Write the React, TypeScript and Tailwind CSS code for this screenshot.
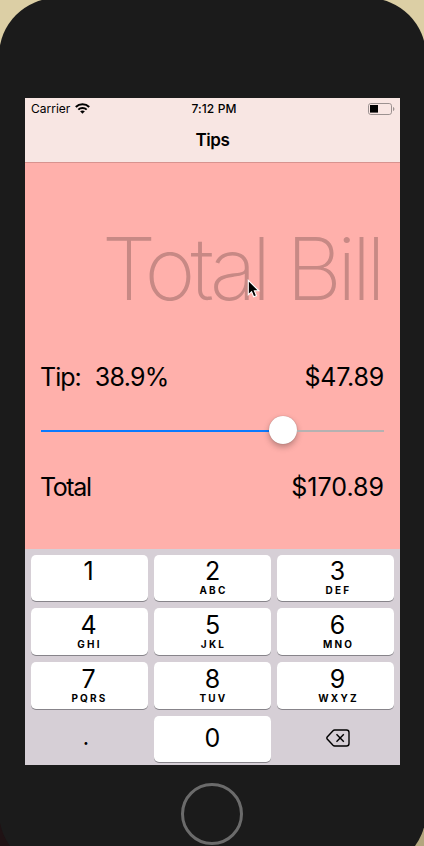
const KEYS = [
  { digit: "1", letters: "" },
  { digit: "2", letters: "ABC" },
  { digit: "3", letters: "DEF" },
  { digit: "4", letters: "GHI" },
  { digit: "5", letters: "JKL" },
  { digit: "6", letters: "MNO" },
  { digit: "7", letters: "PQRS" },
  { digit: "8", letters: "TUV" },
  { digit: "9", letters: "WXYZ" },
];

function WifiIcon() {
  return (
    <svg className="ml-[5px] h-[11px] w-[15px]" viewBox="0 0 15 11" fill="none" stroke="#000">
      <path d="M.8 3.900C4.500 .4 10.500 .4 14.200 3.900" strokeWidth="2.100" />
      <path d="M3.300 6.600C5.600 4.400 9.400 4.400 11.700 6.600" strokeWidth="2" />
      <path d="M7.500 10.700L5.100 8.300C6.500 7.100 8.500 7.100 9.900 8.300Z" fill="#000" stroke="none" />
    </svg>
  );
}

function BatteryIcon() {
  return (
    <svg className="h-[12px] w-[27px]" viewBox="0 0 27 12" fill="none">
      <rect x=".5" y=".5" width="23" height="11" rx="2.3" stroke="#9b9190" />
      <rect x="2" y="2" width="8" height="7.600" fill="#000" />
      <path d="M25 4v4c.8-.3 1.400-1.100 1.400-2S25.800 4.300 25 4Z" fill="#9b9190" />
    </svg>
  );
}

function StatusBar() {
  return (
    <div className="grid h-5 grid-cols-3 items-center text-[12px] leading-5">
      <div className="flex items-center pl-[6px]">
        <span>Carrier</span>
        <WifiIcon />
      </div>
      <div className="pt-px pl-[3px] text-center font-medium tracking-[0.1px]">7:12 PM</div>
      <div className="flex justify-end pr-[5px]">
        <BatteryIcon />
      </div>
    </div>
  );
}

function Slider() {
  return (
    <div className="mt-[24px] flex h-7 items-center">
      <div className="mt-[2px] h-[2px] w-[228.4px] bg-[#0a7aff]" />
      <div className="size-7 shrink-0 rounded-full bg-white shadow-[0_3px_6px_rgba(0,0,0,0.28),0_0_1px_rgba(0,0,0,0.3)]" />
      <div className="mt-[2px] h-[2px] flex-1 bg-[#b5b1b1]" />
    </div>
  );
}

function Key({ digit, letters }: { digit: string; letters: string }) {
  return (
    <button className="flex flex-col items-center justify-end rounded-[5px] bg-white pb-[5px] shadow-[0_1px_0_#87848a] nth-[3n]:pl-[4px] nth-[3n+1]:pr-[2px]">
      <span className="text-[25px] leading-[30px]">{digit}</span>
      <span className="-mt-px h-[11px] pl-[2px] text-[10px] leading-[11px] font-bold tracking-[2.2px]">{letters}</span>
    </button>
  );
}

function Keypad() {
  return (
    <div className="grid h-[216px] grid-cols-3 grid-rows-[46px_47px_47px_46px] gap-x-[6px] gap-y-[7px] bg-[#d6cfd6] px-[6px] pt-[6px]">
      {KEYS.map((key) => (
        <Key key={key.digit} digit={key.digit} letters={key.letters} />
      ))}
      <button className="flex items-center justify-center pr-[7px] pb-[4px]">
        <span className="text-[22px] leading-[40px]">.</span>
      </button>
      <button className="flex items-center justify-center rounded-[5px] bg-white text-[25px] shadow-[0_1px_0_#87848a]">
        0
      </button>
      <button className="flex items-center justify-center pl-[5px]">
        <svg className="mt-[-2px] h-[18px] w-[24px]" viewBox="0 0 24 18" fill="none" stroke="#000" strokeWidth="1.4">
          <path d="M8.600 1H20.500Q23 1 23 3.500V14.500Q23 17 20.500 17H8.600Q7.700 17 7 16.300L1.200 10Q.500 9 1.200 8L7 1.700Q7.700 1 8.600 1Z" />
          <path d="M10.500 5.200L17.800 12.800M17.800 5.200L10.500 12.800" />
        </svg>
      </button>
    </div>
  );
}

export default function App() {
  return (
    <div className="relative h-[846px] w-[424px] overflow-hidden bg-[#dccfa5] font-['Inter','Liberation_Sans',sans-serif] text-black">
      <div className="absolute top-[800px] left-0 h-[46px] w-[60px] bg-[#1f1214]" />
      <div className="absolute top-[800px] right-0 h-[46px] w-[60px] bg-[#b3a67e]" />
      <div className="relative -top-[2px] -left-px flex h-[872px] w-[427px] flex-col rounded-[58px] bg-[#1b1b1b] pt-[100px] pl-[26px]">
        <main className="flex h-[667px] w-[375px] flex-col bg-[#ffb0ab]">
          <header className="h-[65px] border-b border-[#d8938f] bg-[#f8e6e3]">
            <StatusBar />
            <h1 className="mt-[11px] text-center text-[17px] leading-[22px] font-semibold tracking-[-0.4px]">Tips</h1>
          </header>
          <section className="flex-1 px-4 pt-[54px]">
            <div className="flex justify-end text-[87px] leading-[104px] font-extralight tracking-[-4.9px] whitespace-nowrap text-[#c78985]">
              <span className="pr-[3px]">Total Bill</span>
            </div>
            <div className="mt-[41px] flex h-[30px] items-center text-[25px] leading-[30px]">
              <span className="-ml-px tracking-[-1px]">Tip:</span>
              <span className="ml-[14px] tracking-[-0.7px]">38.9%</span>
              <span className="ml-auto tracking-[-0.2px]">$47.89</span>
            </div>
            <Slider />
            <div className="mt-[28px] flex items-center justify-between text-[25px] leading-[30px]">
              <span className="-ml-px tracking-[-1.4px]">Total</span>
              <span>$170.89</span>
            </div>
          </section>
          <Keypad />
        </main>
        <div className="mt-[18px] ml-[156px] size-[62px] rounded-full border-[3px] border-[#6b6b6b]" />
      </div>
      <svg className="absolute top-[279px] left-[247px] h-[20px] w-[14px]" viewBox="0 0 14 20">
        <path d="M1.300 1.300V15.800L4.600 12.700L6.700 17.800L9.500 16.700L7.400 11.800H11.900Z" fill="#000" stroke="#fff" strokeWidth="1.100" />
      </svg>
    </div>
  );
}
